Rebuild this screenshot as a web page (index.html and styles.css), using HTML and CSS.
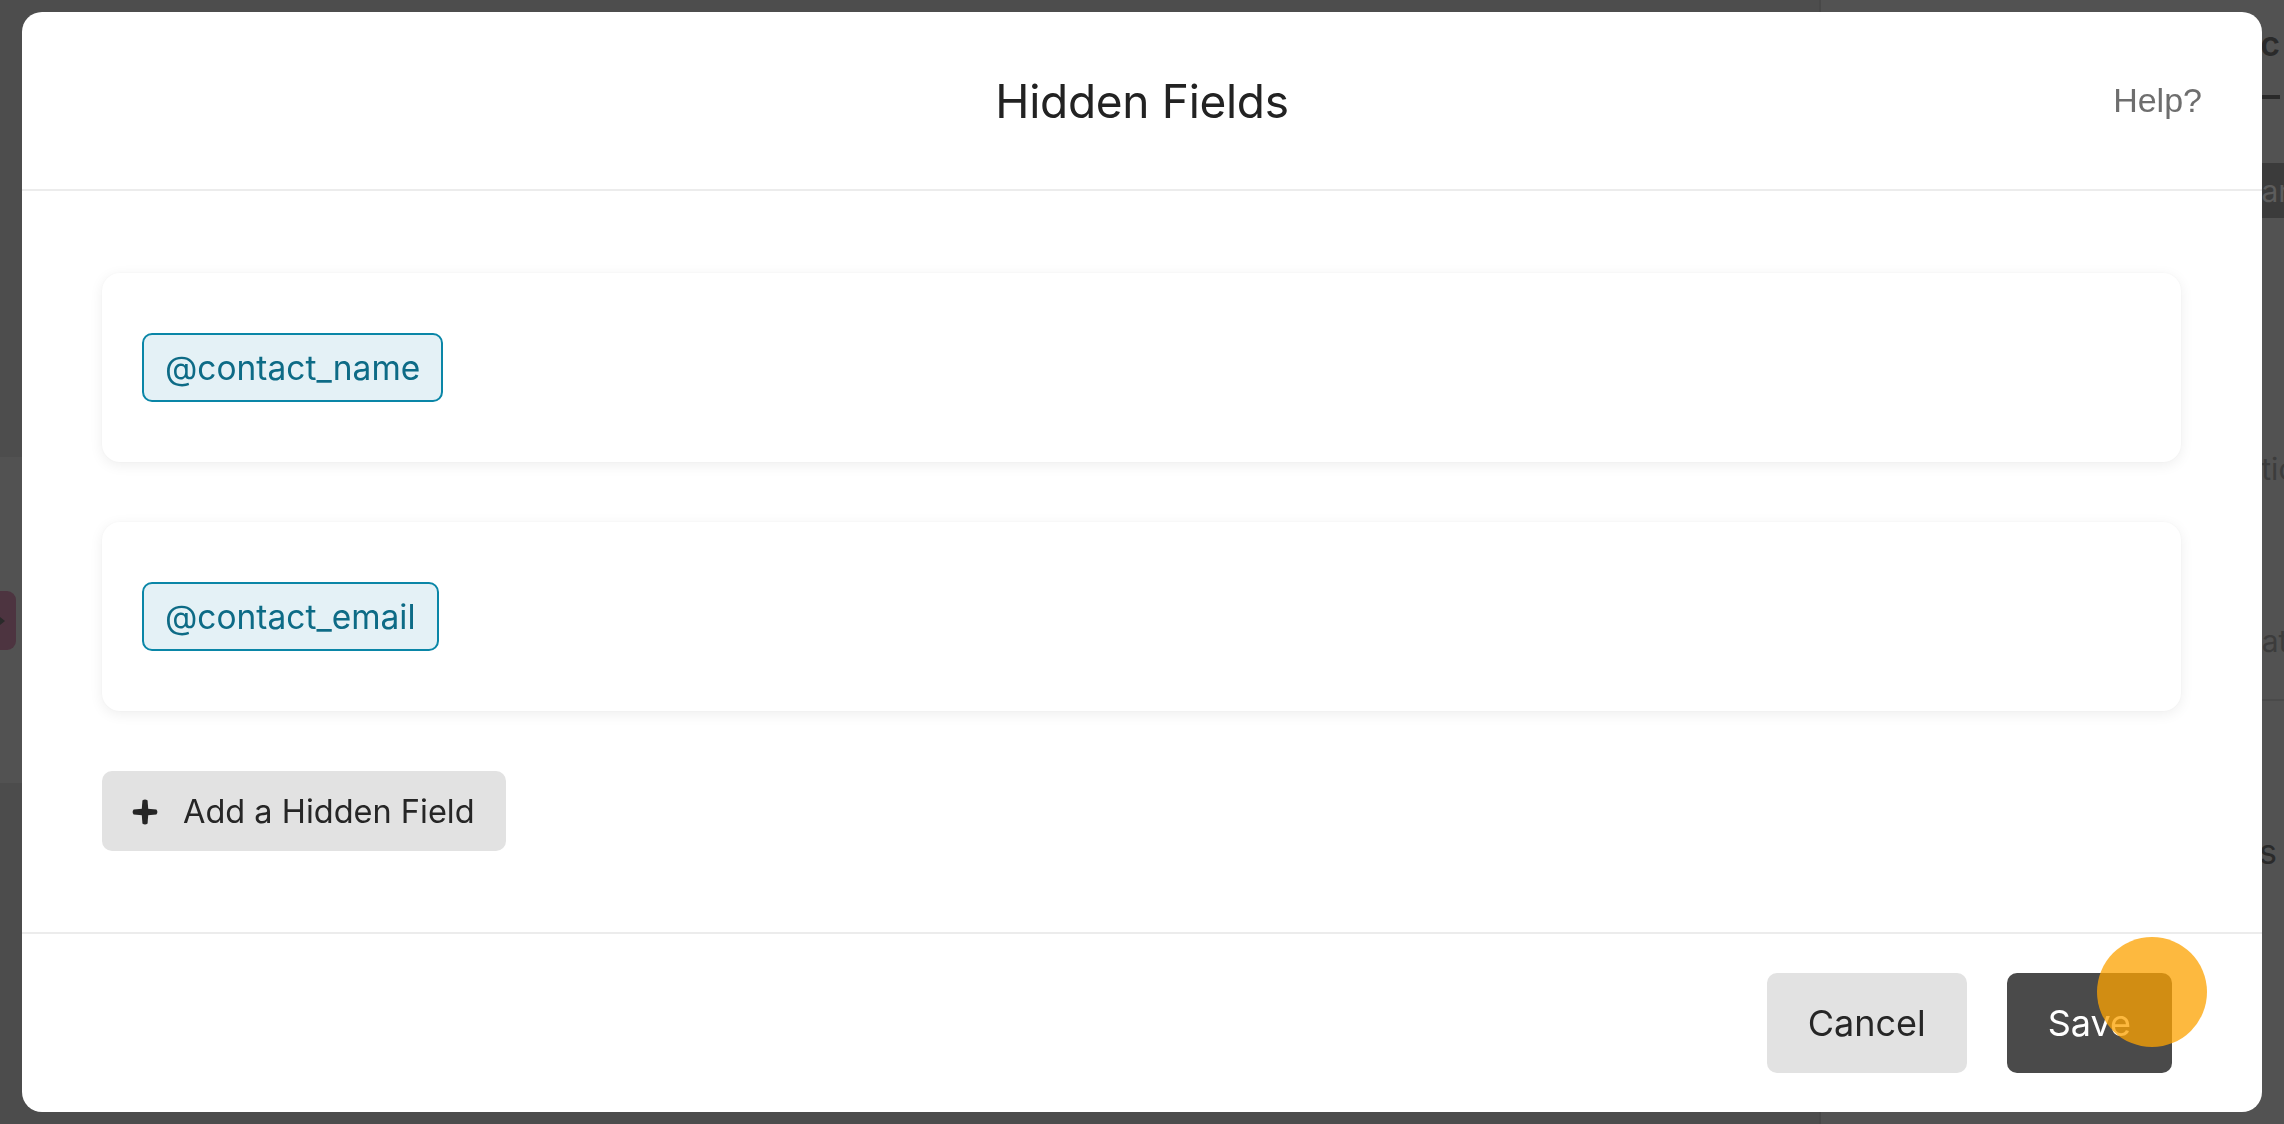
FILE: index.html
```html
<!DOCTYPE html>
<html lang="en">
<head>
<meta charset="utf-8">
<title>Hidden Fields</title>
<link rel="stylesheet" href="styles.css">
</head>
<body>
<div class="page">
  <main class="canvas">
    <div class="band band-top"></div>
    <div class="band band-light"><div class="pill"><span class="pill-caret"></span></div></div>
    <div class="band band-bottom"></div>
  </main>
  <aside class="sidebar">
    <div class="side-tabs"><span class="side-tab">Logic</span></div>
    <div class="side-action"><span>Plan</span></div>
    <div class="side-row side-row-1"><span>Options</span></div>
    <div class="side-row side-row-2"><span>Data</span></div>
    <div class="side-section"><span>Settings</span></div>
  </aside>
</div>

<div class="overlay">
  <div class="modal">
    <header class="modal-header">
      <span class="spacer"></span>
      <h1 class="modal-title">Hidden Fields</h1>
      <a class="help">Help?</a>
    </header>
    <div class="modal-body">
      <div class="field-card"><span class="tag">@contact_name</span></div>
      <div class="field-card"><span class="tag">@contact_email</span></div>
      <button class="add-btn">
        <svg class="plus" width="26" height="26" viewBox="0 0 26 26" aria-hidden="true">
          <path d="M1.6 10.4 L13 9.6 L24.4 10.4 Q26.4 13 24.4 15.6 L13 16.4 L1.6 15.6 Q-0.4 13 1.6 10.4 Z" fill="#262626"/>
          <path d="M10.4 1.6 L9.6 13 L10.4 24.4 Q13 26.4 15.6 24.4 L16.4 13 L15.6 1.6 Q13 -0.4 10.4 1.6 Z" fill="#262626"/>
        </svg>
        <span>Add a Hidden Field</span>
      </button>
    </div>
    <footer class="modal-footer">
      <button class="btn btn-cancel">Cancel</button>
      <button class="btn btn-save">Save</button>
    </footer>
  </div>
</div>
<div class="click-dot"></div>
</body>
</html>
```

FILE: styles.css
```css
* { box-sizing: border-box; }

html, body {
  margin: 0;
  height: 100%;
}

body {
  font-family: Inter, "Noto Sans", "Liberation Sans", sans-serif;
  color: #262626;
  background: #525252;
  overflow: hidden;
}

/* ---------- dimmed page behind the dialog ---------- */
.page {
  display: flex;
  height: 100vh;
}

.canvas {
  flex: 1;
  display: flex;
  flex-direction: column;
}

.band-top { height: 457px; background: #4d4d4d; }
.band-light {
  height: 326px;
  background: #525252;
  padding-top: 134px;
}
.band-bottom { flex: 1; background: #4c4c4c; }

.pill {
  width: 16px;
  height: 59px;
  background: #4d3440;
  border-radius: 0 9px 9px 0;
  display: flex;
  align-items: center;
}
.pill-caret {
  width: 0;
  height: 0;
  border-top: 4px solid transparent;
  border-bottom: 4px solid transparent;
  border-left: 5px solid #2a2a2a;
}

.sidebar {
  width: 465px;
  border-left: 2px solid #484848;
  background: #525252;
  display: flex;
  flex-direction: column;
  font-size: 30px;
  line-height: 40px;
  white-space: nowrap;
  overflow: hidden;
}

.side-tabs {
  height: 110px;
  padding-top: 24px;
  padding-right: 4px;
  text-align: right;
}
.side-tab {
  display: inline-block;
  font-weight: 600;
  font-size: 34px;
  line-height: 40px;
  color: #2a2a2a;
  padding-bottom: 31px;
  border-bottom: 4px solid #2a2a2a;
}

.side-action {
  margin-top: 53px;
  height: 55px;
  flex: none;
  background: #3b3b3b;
  color: #5c5c5c;
  display: flex;
  align-items: center;
  padding-left: 414px;
}

.side-row {
  color: #3c3c3c;
  height: 40px;
  flex: none;
}
.side-row-1 { margin-top: 231px; padding-left: 399px; }
.side-row-2 { margin-top: 132px; padding-left: 419px; }

.side-section {
  margin-top: 38px;
  border-top: 2px solid #4a4a4a;
  padding-top: 131px;
  padding-right: 7px;
  text-align: right;
  font-size: 34px;
  color: #2a2a2a;
}

/* ---------- dialog ---------- */
.overlay {
  position: fixed;
  inset: 0;
  padding: 12px 22px;
  display: flex;
}

.modal {
  flex: 1;
  background: #ffffff;
  border-radius: 20px;
  display: flex;
  flex-direction: column;
  overflow: hidden;
}

.modal-header {
  height: 179px;
  flex: none;
  border-bottom: 2px solid #ececec;
  display: grid;
  grid-template-columns: 1fr auto 1fr;
  align-items: center;
  padding: 0 60px;
}

.modal-title {
  margin: 0;
  font-weight: 400;
  font-size: 46px;
  color: #222222;
  letter-spacing: -0.3px;
}

.help {
  justify-self: end;
  font-family: "Liberation Sans", Arial, sans-serif;
  font-size: 34px;
  color: #6e6e6e;
  cursor: pointer;
}

.modal-body {
  flex: 1;
  padding: 82px 81px 0 80px;
  display: flex;
  flex-direction: column;
  align-items: flex-start;
  gap: 60px;
}

.field-card {
  align-self: stretch;
  background: #ffffff;
  border-radius: 18px;
  padding: 60px 40px;
  box-shadow: 0 3px 14px rgba(0, 0, 0, 0.07), 0 0 2px rgba(0, 0, 0, 0.03);
}

.tag {
  display: inline-flex;
  align-items: center;
  height: 69px;
  padding: 0 21px;
  border: 2px solid #0a86a7;
  border-radius: 10px;
  background: #e4f1f6;
  color: #0d6b86;
  font-size: 33.5px;
}

.add-btn {
  display: inline-flex;
  align-items: center;
  gap: 25px;
  height: 80px;
  padding: 0 31px 0 30px;
  border: 0;
  border-radius: 10px;
  background: #e2e2e2;
  color: #262626;
  font-family: inherit;
  font-size: 32.5px;
}
.add-btn .plus { margin-top: 2px; flex: none; }

.modal-footer {
  height: 180px;
  flex: none;
  border-top: 2px solid #ececec;
  display: flex;
  justify-content: flex-end;
  align-items: center;
  gap: 40px;
  padding-right: 90px;
}

.btn {
  height: 100px;
  padding: 0 41px;
  border: 0;
  border-radius: 10px;
  font-family: inherit;
  font-size: 36px;
}
.btn-cancel { background: #e2e2e2; color: #262626; }
.btn-save { background: #4a4a4a; color: #ffffff; }

/* click indicator drawn over the Save button */
.click-dot {
  position: fixed;
  left: 2097px;
  top: 937px;
  width: 110px;
  height: 110px;
  border-radius: 50%;
  background: rgba(253, 163, 2, 0.76);
}
```
